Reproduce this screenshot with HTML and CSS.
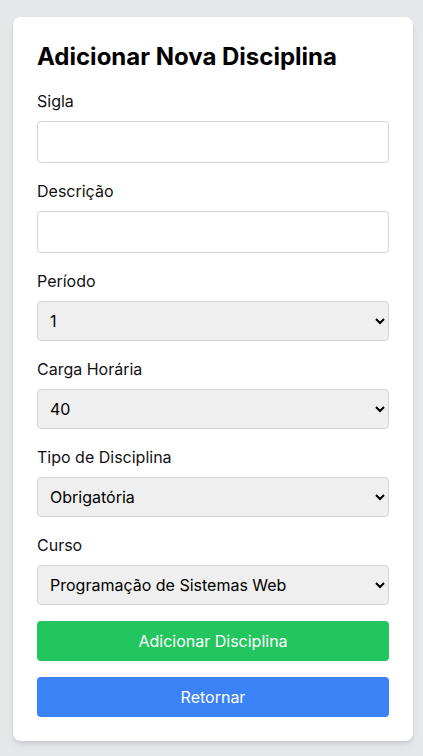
FILE: index.html
```html
<!DOCTYPE html>
<html lang="pt-BR">
<head>
<meta charset="utf-8">
<title>Adicionar Nova Disciplina</title>
<link rel="stylesheet" href="styles.css">
</head>
<body>
<div class="card">
  <h1 class="title">Adicionar Nova Disciplina</h1>
  <form class="form">
    <div class="field">
      <label class="label" for="sigla">Sigla</label>
      <input class="input" id="sigla" type="text">
    </div>
    <div class="field">
      <label class="label" for="descricao">Descrição</label>
      <input class="input" id="descricao" type="text">
    </div>
    <div class="field">
      <label class="label" for="periodo">Período</label>
      <select class="select" id="periodo"><option>1</option></select>
    </div>
    <div class="field">
      <label class="label" for="carga">Carga Horária</label>
      <select class="select" id="carga"><option>40</option></select>
    </div>
    <div class="field">
      <label class="label" for="tipo">Tipo de Disciplina</label>
      <select class="select" id="tipo"><option>Obrigatória</option></select>
    </div>
    <div class="field">
      <label class="label" for="curso">Curso</label>
      <select class="select" id="curso"><option>Programação de Sistemas Web</option></select>
    </div>
    <button class="btn btn-green" type="button">Adicionar Disciplina</button>
    <button class="btn btn-blue" type="button">Retornar</button>
  </form>
</div>
</body>
</html>
```
FILE: styles.css
```css
* { box-sizing: border-box; }
html, body { margin: 0; padding: 0; }
body {
  background: #e5e7eb;
  font-family: Inter, "Noto Sans", sans-serif;
  color: #111;
  padding: 17px 10px 15px 13px;
}
.card {
  width: 400px;
  background: #fff;
  border-radius: 8px;
  box-shadow: 0 4px 6px -1px rgba(0,0,0,0.1), 0 2px 4px -2px rgba(0,0,0,0.1);
  padding: 24px;
}
.title {
  margin: 0 0 16px;
  font-size: 24px;
  line-height: 32px;
  font-weight: 700;
  color: #000;
}
.form { display: flex; flex-direction: column; gap: 16px; }
.field { display: flex; flex-direction: column; gap: 8px; }
.label {
  font-size: 16px;
  line-height: 24px;
  color: #111;
}
.input {
  height: 42px;
  width: 100%;
  border: 1px solid #d1d5db;
  border-radius: 4px;
  padding: 8px;
  font: inherit;
  background: #fff;
}
.select {
  height: 40px;
  width: 100%;
  border: 1px solid #d1d5db;
  border-radius: 4px;
  padding: 8px;
  font-family: inherit;
  font-size: 16px;
  color: #000;
  background-color: #efefef;
}
.btn {
  height: 40px;
  width: 100%;
  border: none;
  border-radius: 4px;
  font-family: inherit;
  font-size: 16px;
  color: #fff;
  cursor: pointer;
}
.btn-green { background: #22c55e; }
.btn-blue { background: #3b82f6; }
```
